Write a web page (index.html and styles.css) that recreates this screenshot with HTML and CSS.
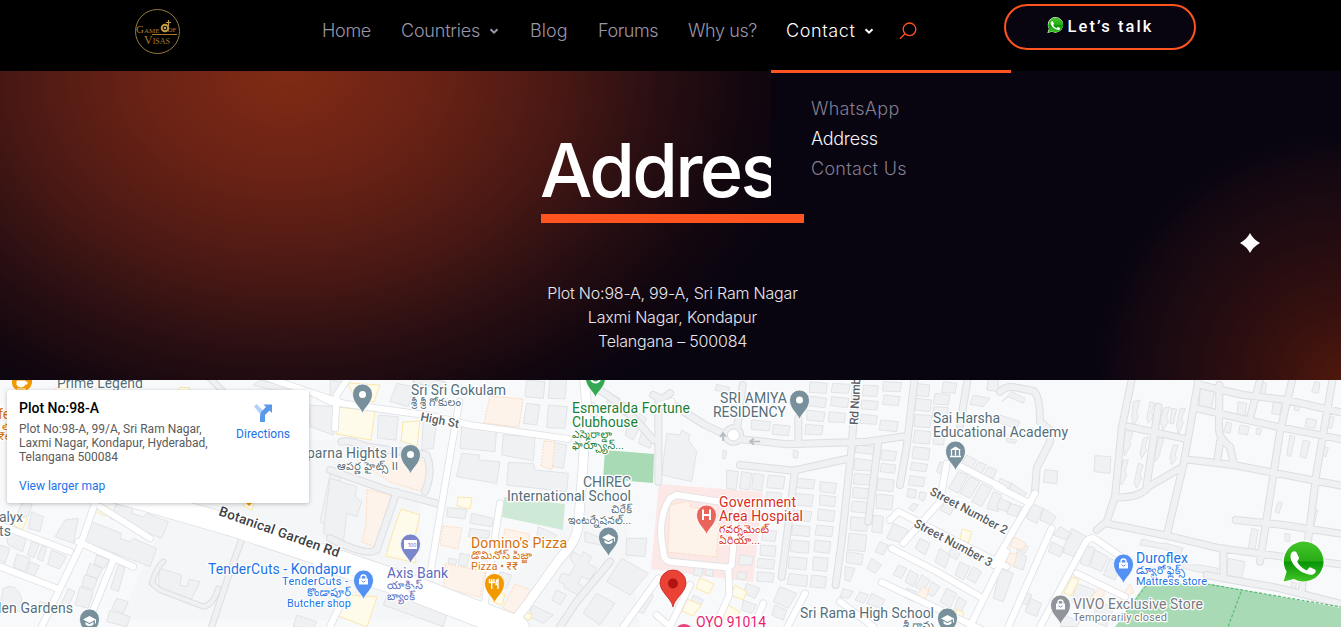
FILE: index.html
```
<!DOCTYPE html>
<html lang="en">
<head>
<meta charset="utf-8">
<title>Address</title>
<link rel="stylesheet" href="styles.css">
</head>
<body>
<header class="header">
  <a class="logo" href="#">
    <svg viewBox="0 0 46 46" width="46" height="46">
      <circle cx="23.500" cy="23.500" r="22" fill="none" stroke="#94793f" stroke-width="1"/>
      <text class="logo-text" x="2" y="25"><tspan font-size="11">G</tspan><tspan font-size="7">AME</tspan></text>
      <text class="logo-text" x="33.500" y="24" font-size="7">OF</text>
      <text class="logo-text" x="10" y="35.500"><tspan font-size="12">V</tspan><tspan font-size="8">ISAS</tspan></text>
      <path d="M18 26.500H43" stroke="#a87b25"/>
      <circle cx="31" cy="20" r="3.300" fill="#211808" stroke="#c39a42" stroke-width="2"/>
      <path d="M34.500 12v6M32 14.500h5" stroke="#c89a37" stroke-width="1.200"/>
      <circle cx="31" cy="20" r="1" fill="#e8d7a0"/>
    </svg>
  </a>
  <nav class="nav">
    <a class="nav-link home" href="#">Home</a>
    <a class="nav-link countries" href="#"><span>Countries</span><svg class="chevron" viewBox="0 0 10 7"><path d="M1.500 1.200 5 4.700 8.500 1.200"/></svg></a>
    <a class="nav-link blog" href="#">Blog</a>
    <a class="nav-link forums" href="#">Forums</a>
    <a class="nav-link why" href="#">Why us?</a>
    <div class="nav-item">
      <a class="nav-link contact active" href="#"><span>Contact</span><svg class="chevron" viewBox="0 0 10 7"><path d="M1.500 1.200 5 4.700 8.500 1.200"/></svg></a>
      <div class="submenu">
        <a class="sub-link" href="#">WhatsApp</a>
        <a class="sub-link current" href="#">Address</a>
        <a class="sub-link" href="#">Contact Us</a>
      </div>
    </div>
    <svg class="search" viewBox="0 0 18 18"><circle cx="10.500" cy="7.300" r="6.300"/><path d="M6 11.800 1 16.800" stroke-width="1.900"/></svg>
  </nav>
  <a class="talk" href="#">
    <svg class="talk-icon" viewBox="0 0 42 42"><use href="#whatsapp"/></svg><span>Let’s talk</span>
  </a>
</header>

<section class="hero">
  <h1 class="hero-title">Address</h1>
  <p class="hero-address">Plot No:98-A, 99-A, Sri Ram Nagar<br>Laxmi Nagar, Kondapur<br>Telangana – 500084</p>
  <svg class="star" viewBox="0 0 20 20"><path d="M10 0Q13 6 20 10Q13 14 10 20Q7 14 0 10Q7 6 10 0Z" fill="#fff"/></svg>
</section>

<section class="map">
<svg class="map-canvas" viewBox="0 380 1341 247">
  <defs>
    <linearGradient id="wa-green" x2="0" y2="1"><stop offset="0" stop-color="#45c52c"/><stop offset=".48" stop-color="#28ad14"/><stop offset=".52" stop-color="#099507"/><stop offset="1" stop-color="#42c526"/></linearGradient>
    <g id="whatsapp">
      <path d="M22 0A20.500 20.500 0 1 1 13 39L1 42 5 31A20.500 20.500 0 0 1 22 0Z" fill="#fff"/>
      <path d="M22 1.500A19.500 19.500 0 1 1 13 38L3 40.500 6 31A19.500 19.500 0 0 1 22 1.500Z" fill="url(#wa-green)"/>
      <path d="M10 14C11 11 14 10 15.500 12L18 17C18.500 19 16 20 16.500 21.500 18.500 25 22 28.500 25.500 29.500 27 29.500 27 26.500 29 26.500L34 29C35.500 31 33 34 30 34 19 33.500 8 22 10 14Z" fill="#fff"/>
    </g>
    <g id="pin"><path d="M0 20C-1 14-10 9.500-10 0A10 10 0 0 1 10 0C10 9.500 1 14 0 20Z" stroke="#fff" stroke-width=".8"/></g>
    <g id="bag"><path d="M-4.500-1.500h9v6h-9z" fill="#fff"/><path d="M-2.500-1v-1.500a2.500 2.500 0 0 1 5 0V-1" fill="none" stroke="#fff" stroke-width="1.300"/><path d="M-2 .8q2 2.600 4 0" fill="none" stroke="#6c93d8"/></g>
    <g id="cap"><path d="M-6.500-.5 0-4 6.500-.5 0 3ZM-4 2v2.500q4 3 8 0V2L0 4.200Z" fill="#fff"/><path d="M6-.5v4" stroke="#fff"/></g>

    <g id="grey-roads" class="roads">
      <g transform="translate(0 375) scale(.33333)">
        <path class="w20" d="M730 480 690 590 635 755M620 0 680 60"/>
        <path class="w16" d="M490 560Q470 575 455 625L480 645 610 695Q640 690 655 640"/>
      </g>
      <g transform="translate(330 375) scale(.33333)">
        <path class="w24" d="M0 285 170 345 320 385M200 350 140 525Q110 545 0 490M35 200Q60 195 110 215L290 240Q310 290 285 350M840 560 740 680 690 755M260 15 340 30M770 30Q850 50 970 195M1020 55 985 80V320"/>
      </g>
      <g transform="translate(660 375) scale(.33333)">
        <path class="w24" d="M-20 60 40 90 135 150 220 190 380 208 620 200 740 183M415 130V205M590 0 575 215 545 500 527 630M765 0 740 215 720 330M240 270 400 287 560 252M405 285 385 450 365 605M655 200 625 440M925 0 900 150M248 30 230 170"/>
        <circle cx="220" cy="180" r="22" class="w20"/>
      </g>
      <g transform="translate(1000 375) scale(.33333)">
        <path class="w22" d="M398 0 365 160 345 365 320 440 290 465M320 445 500 482 660 520 1035 570M598 0 550 270 500 482M555 253 700 270 1035 334M590 100 830 155 1035 195M600 30 730 60 860 75 1035 115M880 0 840 170 780 560M1000 0 950 290 905 650M658 30 657 160Q655 190 690 215L700 260M660 200 653 250M780 15 750 130M345 367Q420 370 445 335L540 280M475 95 440 330M385 155 550 190M0 50Q20 30 50 38L100 48Q120 60 120 140L150 165 150 200 110 280 105 350M707 435 850 450 1035 478M670 520 670 610 840 640 1035 690M620 600 670 610"/>
      </g>
    </g>
    <g id="white-roads" class="roads">
      <g transform="translate(0 375) scale(.33333)">
        <path class="w62" d="M300 340 430 375 690 450 1040 565"/>
        <path class="w22" d="M290 370 240 515 125 755M235 500 400 575M0 450 210 530M340 555 260 755M300 395 450 490M0 575 170 640M780 0 880 35 1030 85"/>
      </g>
      <g transform="translate(330 375) scale(.33333)">
        <path class="w76" d="M-20 545 0 555 210 625 390 695 560 760"/>
        <path class="w22" d="M388 80 345 330 300 600M-30 65 0 80 140 100 300 122 420 150 715 192M510 385 462 700M985 610 880 755M60 0 20 60 15 160M0 755 50 650"/>
        <path class="w28" d="M762 0 770 90 758 290 745 450Q740 500 690 550L590 690 540 755"/>
      </g>
      <g transform="translate(660 375) scale(.33333)">
        <path class="w22" d="M-10 720 30 755 90 630M205 580 208 660 165 755M10 530Q-10 430 30 370L50 360 230 388 215 570Q210 580 180 575L30 560Q10 555 10 530M435 655 370 780M310 685 270 780M665 622 1020 790M695 520 830 590 960 665M690 435 715 410 1040 575M1040 530 930 755M860 265 840 380 730 505M890 268 1030 340M540 680 640 755M0 90 35 80"/>
      </g>
      <g transform="translate(1000 375) scale(.33333)">
        <path class="w22" d="M-10 335 90 385M105 355 -20 570M155 460 25 755M385 560 290 495Q270 480 255 505L120 755M230 595 375 665"/>
      </g>
    </g>
  </defs>

  <path d="M0 380H1341V627H0Z" fill="#f8f9fb"/>
  <path d="M200 440H420V620H120ZM500 590 620 470 640 627H500Z" fill="#f5f6f8"/>
  <path d="M605 450 654 454 653 483 603 479Z" fill="#a8dab5"/>
  <path d="M504 497 565 504 563 530 502 517Z" fill="#ceead6"/>
  <path d="M659 484 763 492 753 582 651 569Z" fill="#fce8e6"/>
  <path d="M1146 583 1210 584 1341 608V627H1115Z" fill="#a8dab5"/>

  <!-- building footprints, by district -->
  <g class="buildings">
    <g transform="translate(0 375) scale(.33333)">
      <path d="M20 495 35 465 80 485 68 530 25 510ZM95 500 118 508 102 548 82 540ZM125 512 140 518 128 558 112 552ZM155 525 200 545 178 582 143 568ZM50 537 90 550 75 590 40 575ZM90 560 118 572 102 607 78 598ZM0 510 30 520 15 565-10 550ZM65 385 98 380 85 425 50 420ZM95 410 130 425 120 470 85 460ZM195 435 235 430 220 505 165 485ZM350 385 400 400 395 415 430 425 440 415 505 440 485 490 330 430ZM275 440 365 475 360 490 390 500 400 490 470 520 450 575 250 500ZM290 540 328 555 312 580 282 568ZM270 565 308 580 293 610 258 600ZM255 598 292 612 280 645 245 633ZM240 635 280 650 265 700 225 690ZM205 640 225 650 200 705 182 690ZM355 570 375 578 355 650 332 640ZM350 670 385 680 370 715 335 700ZM330 705 390 725 380 755 320 740ZM10 640Q50 620 65 670L60 710 0 690ZM120 680 160 690 150 715 110 705ZM480 580 545 600 540 630 560 635 568 612 600 620 570 680 500 655Q465 650 480 580ZM890 720 950 740 940 760 880 755ZM925 90 1000 95 1000 180 930 155ZM780 15 880 40 870 60 760 30Z"/>
      <path d="M990 300 1020 290V470L960 440Z"/>
    </g>
    <g transform="translate(330 375) scale(.33333)">
      <path d="M0 310 80 335 75 365 95 380 80 425 50 415 40 505-20 475ZM0 15 35 20 20 60 0 65ZM145 120 205 125 198 195 142 190ZM280 130 320 140 310 220 275 225ZM200 25 250 35 235 95 180 80ZM395 155 500 162 495 230 390 220ZM520 180 615 185 610 257 515 240ZM395 235 450 240 445 255 510 260 500 325 380 305ZM535 262 610 265 615 285 715 295 710 350 530 330ZM590 15 645 20 640 70 585 65ZM660 5 710 10 705 72 655 70ZM655 90 712 95 705 160 650 158ZM590 85 630 90 620 150 580 145ZM655 200 710 210 700 280 650 272ZM352 398 410 403 405 432 350 425ZM425 415 490 430 485 455 420 445ZM420 460 480 468 475 490 415 485ZM355 550 380 553 378 568 355 565ZM390 535 420 540 410 575 385 570ZM890 490 950 490 945 545 888 540ZM875 550 955 595 900 660 830 620ZM800 655 855 685 810 750 760 715ZM730 530 755 545 760 530 785 545 775 565 800 580 780 615 755 605 745 625 765 640 755 665 705 640 700 625 685 620 695 595 720 600 735 570 720 550ZM605 690 670 720 640 745 600 725ZM680 645 710 660 690 690 665 675ZM625 455 680 480 665 500 620 485ZM940 660 960 645 970 665 940 715 920 710ZM510 590 545 600 530 640 505 635ZM170 665 200 655 350 720 340 755 160 690ZM765 470 840 500 835 515 765 500ZM880 80 915 100 900 130 870 115ZM920 110 950 130 935 165 905 145ZM895 145 925 165 910 195 885 180ZM935 170 970 190 960 220 925 205ZM840 55 870 70 860 95 830 85ZM780 80 815 95 800 125 775 110Z"/>
    </g>
    <g transform="translate(660 375) scale(.33333)">
      <path d="M20 175 60 180 65 165 90 180 85 195 110 230 95 320 5 300ZM200 285 235 290 228 345 200 340ZM245 290 275 295 268 345 238 340ZM280 295 312 300 305 348 275 342ZM325 300 375 305 370 342 320 338ZM320 350 365 355 360 395 315 390ZM410 310 465 315 460 342 410 338ZM480 320 530 325 525 355 480 350ZM405 355 460 360 455 395 405 390ZM480 360 528 365 523 395 478 390ZM400 405 455 410 450 440 398 435ZM475 402 525 408 520 440 472 435ZM398 450 450 455 448 485 395 480ZM470 450 520 455 515 485 465 480ZM395 495 448 500 445 535 390 530ZM465 495 512 500 508 535 462 530ZM388 545 442 550 438 585 385 580ZM460 545 505 550 500 590 458 585ZM388 595 443 602 440 635 382 628ZM455 600 500 605 495 640 450 635ZM310 465 350 468 345 500 305 495ZM302 510 348 513 345 545 300 540ZM295 550 345 555 340 583 290 578ZM292 590 343 595 338 622 290 618ZM450 20 502 25 498 55 448 52ZM445 63 500 70 495 98 443 92ZM440 105 495 112 490 140 440 135ZM437 148 490 152 485 180 435 178ZM518 25 570 28 565 55 513 52ZM515 65 567 70 562 98 512 92ZM508 110 557 115 553 143 505 140ZM275 135 332 140 328 168 273 163ZM340 148 390 153 385 182 337 178ZM170 28 210 38 205 55 165 45ZM610 30 655 33 650 65 608 62ZM605 75 655 80 650 105 602 102ZM605 118 652 123 648 148 600 145ZM670 20 725 23 720 50 668 48ZM672 60 720 65 715 92 668 88ZM662 135 715 140 710 170 658 165ZM765 25 810 30 805 65 762 62ZM768 70 815 75 810 110 765 105ZM765 118 815 122 810 158 762 155ZM765 165 812 170 808 207 758 203ZM760 215 810 220 805 255 756 250ZM755 262 803 268 798 290 750 285ZM750 302 795 308 790 335 745 330ZM590 210 643 215 640 238 585 232ZM585 250 640 257 635 288 582 285ZM583 295 638 300 633 330 580 327ZM580 337 635 342 630 372 577 368ZM577 378 632 382 628 415 573 410ZM573 425 625 430 620 470 570 465ZM567 475 620 480 615 530 562 525ZM560 530 610 538 605 570 558 562ZM667 225 710 230 705 258 662 254ZM665 265 708 270 703 295 660 290ZM655 310 703 315 698 350 650 345ZM650 357 700 362 695 405 648 400ZM640 420 670 425 665 475 635 470ZM850 20 890 25 885 55 845 52ZM825 55 870 60 865 90 820 87ZM820 95 865 98 860 130 817 127ZM820 175 855 180 850 210 820 207ZM940 60 990 70 970 95 930 88ZM985 10 1015 12 1015 50 980 45ZM745 340 770 345 765 370 740 365ZM660 500 685 510 670 540 645 530ZM635 550 665 570 645 595 620 580ZM700 445 745 465 730 505 680 490ZM555 575 585 580 570 620 555 615ZM240 540 280 545 275 570 235 570ZM235 590 260 593 255 615 230 610ZM360 635 410 655 385 700 340 680ZM260 625 300 640 285 670 250 655ZM250 675 290 690 275 715 245 705ZM345 690 380 705 370 735 335 720ZM100 660 130 675 120 695 90 685ZM105 575 130 580 125 605 100 600ZM138 580 160 583 157 605 135 600ZM400 225 415 230 412 250 400 247ZM190 225 200 228 196 252 188 250Z"/>
      <path d="M840 260 865 270 850 300 830 290ZM895 290 925 300 895 355 865 340ZM930 305 960 320 930 370 900 355ZM965 325 995 340 965 395 935 380ZM920 240 950 255 935 280 905 265ZM955 260 980 270 965 295 940 285ZM985 275 1010 285 1000 310 970 300ZM1000 350 1025 360 1015 410 980 400ZM860 370 890 385 870 420 840 405ZM840 520 870 540 855 580 825 560ZM880 500 910 515 890 555 865 540ZM900 560 930 575 910 615 885 600ZM940 575 965 590 945 625 920 610ZM780 490 810 505 795 540 765 520ZM715 570 740 580 725 610 700 600ZM750 585 775 600 760 635 735 620ZM740 640 770 650 760 680 730 665ZM785 600 810 615 790 650 765 635ZM815 620 840 635 820 665 800 655ZM860 640 890 655 870 700 840 680ZM895 665 920 680 900 720 880 710ZM600 650 625 660 610 685 585 675ZM635 655 675 675 660 700 620 685ZM550 640 580 650 565 670 540 665ZM780 350 800 355 790 380 775 370ZM760 385 775 390 760 410 745 400Z"/>
    </g>
    <g transform="translate(1000 375) scale(.33333)">
      <path d="M285 242 333 245 330 295 282 290ZM135 284 173 288 170 326 130 322ZM0 310 35 325 25 345-5 335ZM35 325 80 355 65 375 25 350ZM0 370 35 385 20 410-10 400ZM30 385 65 395 50 425 20 415ZM95 385 130 400 110 445 80 430ZM130 400 168 425 155 450 120 435ZM180 455 215 475 200 495 160 480ZM215 460 260 485 220 545 185 530 200 495ZM155 500 195 520 180 545 145 530ZM255 510 285 520 265 575 240 565ZM285 525 325 545 305 590 270 575ZM330 550 365 565 345 615 310 600ZM60 500 85 515 75 535 50 525ZM50 530 80 545 70 585 40 575ZM75 650 95 660 85 690 65 685ZM90 670 125 685 110 725 75 710ZM0 580 40 595 10 680-20 670ZM230 625 285 645 260 700 215 680ZM290 675 340 700 320 755 280 740ZM190 720 240 740 230 755H180ZM5 80 35 50 75 70 70 85 25 65ZM0 120 60 140 50 160 0 145ZM20 190 50 195 45 205 20 200ZM400 80 420 75 410 110 415 125 400 155 395 130ZM450 80 465 85 455 110 460 125 445 145 440 130ZM490 100 510 95 500 125 505 140 490 165 480 140ZM540 100 557 100 545 130 550 145 535 180 530 150ZM375 170 400 165 390 200 392 210 375 242 370 220ZM430 190 445 185 435 215 440 225 425 250 420 235ZM475 190 492 190 480 230 480 240 465 260 465 235ZM520 210 535 210 525 240 530 250 515 270 510 245ZM370 255 385 255 375 290 380 300 365 330 355 315ZM415 265 430 270 420 300 425 310 410 340 402 325ZM515 100 530 102 520 147 510 145ZM425 492 480 505 500 505 550 520 540 540 490 522 420 510ZM540 560 570 570 600 570 655 580 650 600 590 590 550 580ZM600 40 645 40 635 100 598 95ZM715 80 740 85 735 125 710 120ZM680 140 695 145 690 175 670 170ZM720 150 748 155 742 180 715 175ZM770 160 785 162 780 180 768 177ZM820 80 845 85 840 120 815 115ZM870 180 885 185 872 245 860 240ZM910 195 930 200 918 250 900 245ZM970 215 985 218 978 245 965 240ZM885 90 900 92 895 108 882 105ZM920 130 950 135 945 160 915 155ZM990 125 1003 127 995 160 982 158ZM835 380 847 382 837 415 825 410ZM935 400 953 405 940 462 925 458ZM755 460 775 465 765 525 745 520ZM855 475 870 478 868 500 855 497ZM685 550 735 560 725 610 680 600ZM875 620 890 625 885 645 872 640ZM945 20 960 22 955 55 935 50ZM780 20 800 25 795 60 775 55Z"/>
    </g>
  </g>
  <g class="buildings warm">
    <path d="M337 407 375 411 371 440 336 434ZM403 422 420 421 417 446 401 441ZM458 497 472 498 470 509 457 506ZM401 509 420 515 417 527 413 546 416 563 386 556 392 535ZM98 502 112 510 105 516 95 511ZM17 515 28 519 22 530 13 525ZM338 594 377 597 367 627 336 615ZM348 383 380 385 374 402 355 398ZM60 380 76 381 70 392 55 391ZM180 387 190 388 186 396 176 395ZM246 497 255 500 252 510 243 506ZM700 578 714 584 709 594 696 588ZM687 599 701 605 693 616 682 611ZM735 585 747 592 743 600 731 595ZM728 605 740 612 733 622 722 618ZM962 529 972 532 968 543 960 540ZM1072 577 1079 580 1071 596 1064 593ZM957 609 964 613 959 623 954 620ZM524 612 532 614 530 620 523 618ZM495 592 505 594 502 605 493 602Z"/>
  </g>
  <g class="buildings peach">
    <path d="M490 396 523 399 519 427 484 423ZM544 441 555 442 552 470 541 466ZM367 490 391 495 389 504 385 516 384 535 380 549 362 542 366 525ZM443 526 462 528 458 549 440 545ZM445 564 485 571 480 597 444 588ZM347 442 428 462Q432 475 420 491L390 482 347 453ZM670 505 690 501 690 507 717 511 719 526 716 557 668 552ZM505 529 530 534 527 548 503 539ZM515 584 530 590 520 616 503 608ZM1014 537 1026 543 1023 550 1010 547ZM1010 553 1017 554 1014 566 1003 560ZM922 587 929 590 925 601 917 597ZM1130 584 1134 592 1120 600ZM1100 587 1107 589 1098 604 1090 599Z"/>
  </g>

  <use href="#grey-roads" class="road-edge"/>
  <use href="#grey-roads" class="road-fill grey"/>
  <use href="#white-roads" class="road-edge light"/>
  <use href="#white-roads" class="road-fill"/>
  <circle cx="733.500" cy="435" r="6" fill="#fff" stroke="#dadce0"/>
  <path d="M723 441v-7m-3 3 3-4 3 4M760 441.500h-9m3-3-4 3 4 3" fill="none" stroke="#b6bcc2" stroke-width="1.700"/>
  <path d="M1207 584 1341 607M1241 592 1228 627" fill="none" stroke="#5bb974" stroke-width="1.200" stroke-dasharray="3 1.800"/>
  <path d="M1146 586 1120 620" stroke="#5bb974" stroke-dasharray="3 2"/>

  <!-- places -->
  <g class="slate">
    <use href="#pin" x="362.500" y="394"/><use href="#pin" x="410.500" y="454.500"/><use href="#pin" x="608.500" y="537"/>
    <use href="#pin" x="799.500" y="400"/><use href="#pin" x="955.500" y="451"/><use href="#pin" x="89.500" y="619"/><use href="#pin" x="947.500" y="618"/>
  </g>
  <g fill="#fff"><circle cx="362.500" cy="394.500" r="3.500"/><circle cx="410.500" cy="454.500" r="3.500"/><circle cx="799.500" cy="400" r="3.500"/></g>
  <use href="#cap" x="608.500" y="538"/><use href="#cap" x="89.500" y="620"/><use href="#cap" x="947.500" y="619"/>
  <path d="M950 450 955.500 446.500 961 450Z" fill="#fff"/><path d="M951.500 450v5.500M955.500 450v5.500M959.500 450v5.500M950 456.500h11" stroke="#fff" stroke-width="1.300"/>
  <use href="#pin" x="595.500" y="378" fill="#34a853"/><path d="M591 380Q595.500 385 600 380" stroke="#fff" stroke-width="2" fill="none"/>
  <use href="#pin" x="410.500" y="544" fill="#7986cb"/><path d="M404 540h13v9h-13Z" fill="#fff"/><text x="408" y="547" font-size="5" fill="#5c6bc0">100</text>
  <use href="#pin" x="363.500" y="580" fill="#5491f5"/><use href="#bag" x="363.500" y="580"/>
  <use href="#pin" x="1123.500" y="564" fill="#5491f5"/><use href="#bag" x="1123.500" y="564"/>
  <use href="#pin" x="1060.500" y="605" fill="#8f959b"/><use href="#bag" x="1060.500" y="605"/>
  <use href="#pin" x="494.500" y="583.500" fill="#f29900"/>
  <path d="M489.500 579v3.500h4.500V579M491.700 579v10M498 589v-9.500q-2 .5-2 5h2" fill="none" stroke="#fff" stroke-width="1.400"/>
  <path d="M12 380H32V383Q30 391 22 391Q12 390 12 383Z" fill="#f29900"/><path d="M17 381h8v4q-4 4-8 0ZM25 382h2v2h-2M17 389h9" fill="#fff" stroke="#fff"/>
  <path d="M246 503H252L249 506Z" fill="#f29900"/>
  <use href="#pin" x="706.500" y="515" fill="#e9655b"/><path d="M703 509.500v10.500M710 509.500v10.500M703 515h7" stroke="#fff" stroke-width="2"/>
  <path d="M673 607C672 599 660 592 660 583A13 13 0 0 1 686 583C686 592 674 599 673 607Z" fill="#ea4335" stroke="#c5221f" stroke-width=".8"/><circle cx="673" cy="583.500" r="5" fill="#b31412"/>
  <circle cx="684" cy="634" r="10" fill="#ec407a"/>

  <g class="labels">
    <g class="t-slate">
      <text x="57" y="388" textLength="86">Prime Legend</text>
      <text x="411" y="395" textLength="95">Sri Sri Gokulam</text>
      <text x="411" y="406" class="te" textLength="50">శ్రీ శ్రీ గోకులం</text>
      <text x="307" y="458" textLength="91">parna Hights II</text>
      <text x="337" y="470" class="te" textLength="61">ఆపర్ణ హైట్స్ II</text>
      <text x="583" y="487" textLength="48">CHIREC</text>
      <text x="507" y="501" textLength="124">International School</text>
      <text x="611" y="513" class="te" textLength="21">చిరేక్</text>
      <text x="568" y="524" class="te" textLength="63">ఇంటర్నేషనల్...</text>
      <text x="720" y="403" textLength="67">SRI AMIYA</text>
      <text x="713" y="417" textLength="73">RESIDENCY</text>
      <text x="933" y="423" textLength="67">Sai Harsha</text>
      <text x="933" y="437" textLength="135">Educational Academy</text>
      <text x="800" y="618" textLength="134">Sri Rama High School</text>
      <text x="903" y="629" class="te" textLength="31">శ్రీ రామ</text>
      <text x="-1" y="522" textLength="24">alyx</text>
      <text x="-1" y="536" textLength="12">ts</text>
      <text x="-2" y="613" textLength="75">len Gardens</text>
    </g>
    <g class="t-green">
      <text x="572" y="413" textLength="118">Esmeralda Fortune</text>
      <text x="572" y="427" textLength="66">Clubhouse</text>
      <text x="572" y="438" class="te" textLength="40">ఎస్మెరాల్డా</text>
      <text x="572" y="449" class="te" textLength="52">ఫార్చ్యూన్...</text>
    </g>
    <g class="t-red">
      <text x="719" y="507" textLength="77">Government</text>
      <text x="719" y="521" textLength="84">Area Hospital</text>
      <text x="719" y="533" class="te" textLength="50">గవర్నమెంట్</text>
      <text x="719" y="544" class="te" textLength="41">ఏరియా...</text>
    </g>
    <g class="t-orange">
      <text x="471" y="548" textLength="96">Domino's Pizza</text>
      <text x="471" y="559" class="te" textLength="61">డొమినోస్ పిజ్జా</text>
      <text x="471" y="570" class="small" textLength="47">Pizza • ₹₹</text>
      <text x="-2" y="419">fe</text>
      <text x="2" y="430" class="te">త</text>
      <text x="-1" y="440" class="small">₹e</text>
    </g>
    <g class="t-indigo">
      <text x="387" y="578" textLength="61">Axis Bank</text>
      <text x="387" y="589" class="te" textLength="36">యాక్సిస్</text>
      <text x="387" y="600" class="te" textLength="28">బ్యాంక్</text>
    </g>
    <g class="t-blue">
      <text x="208" y="574" textLength="143">TenderCuts - Kondapur</text>
      <text x="282" y="585" class="small" textLength="66">TenderCuts -</text>
      <text x="307" y="596" class="te" textLength="44">కొండాపూర్</text>
      <text x="287" y="607" class="small" textLength="64">Butcher shop</text>
      <text x="1136" y="563" textLength="52">Duroflex</text>
      <text x="1136" y="574" class="te" textLength="49">డ్యూరోఫ్లెక్స్</text>
      <text x="1136" y="585" class="small" textLength="71">Mattress store</text>
    </g>
    <g class="t-grey">
      <text x="1073" y="609" textLength="130">VIVO Exclusive Store</text>
      <text x="1073" y="621" class="small" textLength="94">Temporarily closed</text>
    </g>
    <text class="t-pink" x="696" y="627" textLength="70">OYO 91014</text>
    <g class="t-road">
      <text class="major" textLength="127" transform="translate(218 515) rotate(19.500)">Botanical Garden Rd</text>
      <text textLength="39" transform="translate(420 420.500) rotate(11)">High St</text>
      <text textLength="86" transform="translate(929 494) rotate(28)">Street Number 2</text>
      <text textLength="87" transform="translate(913 526) rotate(28)">Street Number 3</text>
      <text textLength="47" transform="translate(858 425) rotate(-87)">Rd Numb</text>
    </g>
  </g>
</svg>

  <div class="place-card">
    <div class="place-info">
      <div class="place-name">Plot No:98-A</div>
      <div class="place-address">Plot No:98-A, 99/A, Sri Ram Nagar,<br>Laxmi Nagar, Kondapur, Hyderabad,<br>Telangana 500084</div>
      <a class="place-link" href="#">View larger map</a>
    </div>
    <a class="directions" href="#">
      <svg viewBox="0 0 20 20" width="20" height="20"><path d="M1 3.500 3.500 1 11 8.500V12H8Z" fill="#b3d1f7"/><path d="M7 19V13Q7 10 9 8L13 4 10.500 1.500H19V10L16.500 7.500 12 12V19Z" fill="#5a98e8"/></svg>
      <span>Directions</span>
    </a>
  </div>
  <svg class="whatsapp-float" viewBox="0 0 42 42"><use href="#whatsapp"/></svg>
</section>
</body>
</html>
```
FILE: styles.css
```
* { box-sizing: border-box; }
body {
  margin: 0;
  height: 627px;
  overflow: hidden;
  display: flex;
  flex-direction: column;
  font-family: Inter, "Open Sans", sans-serif;
  background: #080410;
}
a { text-decoration: none; color: inherit; }

.header {
  flex: 0 0 71px;
  display: flex;
  align-items: flex-start;
  background: #000;
}
.logo { margin: 8px 0 0 134px; width: 46px; height: 46px; }
.logo svg { display: block; }
.logo-text { font-family: "Liberation Serif", serif; fill: #a87c28; }

.nav {
  display: flex;
  align-items: center;
  height: 62px;
  margin-left: 142px;
  width: 682px;
  gap: 30px;
}
.nav-link {
  display: flex;
  align-items: center;
  justify-content: space-between;
  color: #9a96a8;
  font-size: 18px;
  font-weight: 300;
  line-height: 24px;
  white-space: nowrap;
  flex: none;
}
.home { width: 49px; letter-spacing: -.3px; }
.countries { width: 98px; letter-spacing: -.2px; }
.blog { width: 38px; letter-spacing: .1px; margin-left: 1px; }
.forums { width: 60px; letter-spacing: -.4px; }
.why { width: 68px; letter-spacing: -.4px; }
.contact { width: 88px; letter-spacing: .6px; }
.active { color: #fff; }
.chevron { width: 10px; height: 7px; }
.chevron path { fill: none; stroke: currentColor; stroke-width: 2; }
.nav-item { position: relative; }
.submenu {
  position: absolute;
  z-index: 2;
  top: 51px;
  left: -15px;
  width: 240px;
  height: 134px;
  padding: 21px 40px 19px;
  background: #080410;
  border-top: 3px solid #ff541f;
  display: flex;
  flex-direction: column;
}
.sub-link {
  line-height: 30px;
  font-size: 18px;
  font-weight: 300;
  letter-spacing: .3px;
  color: #837f91;
}
.current { color: #f4f3f7; letter-spacing: -.3px; }
.search { width: 18px; height: 18px; margin-left: -5px; flex: none; }
.search * { fill: none; stroke: #ff541f; stroke-width: 1.3; }

.talk {
  display: flex;
  align-items: center;
  justify-content: center;
  margin-top: 4px;
  width: 192px;
  height: 46px;
  padding-bottom: 1px;
  border: 2px solid #ff541f;
  border-radius: 23px;
  background: #080410;
  color: #fff;
  font: 500 16.5px Roboto, sans-serif;
  letter-spacing: 2.05px;
  gap: 5px;
}
.talk-icon { width: 16px; height: 16px; margin-top: -4px; }

.hero {
  flex: 0 0 309px;
  position: relative;
  display: flex;
  flex-direction: column;
  align-items: center;
  padding-left: 4px;
  background:
    radial-gradient(ellipse 530px 400px at 285px 0, #802b14 0%, #6c2315 25%, #4c1914 50%, #2a0f12 70%, #13070f 87%, #080410 100%),
    #080410;
}
.hero::before {
  content: "";
  position: absolute;
  inset: 0;
  background: radial-gradient(circle 245px at 100% 100%, #4e180c 0%, #35100f 30%, #220c11 60%, #130812 88%, rgba(8, 4, 16, 0) 100%);
}
.hero-title {
  position: relative;
  margin: 57px 0 0;
  width: 263px;
  height: 95px;
  border-bottom: 9px solid #ff541f;
  color: #fff;
  font-size: 74px;
  font-weight: 500;
  line-height: 84px;
  letter-spacing: -2.7px;
  text-indent: -1px;
  white-space: nowrap;
}
.hero-address {
  position: relative;
  margin: 58px 0 0;
  color: #e8e6ee;
  text-align: center;
  font-size: 16px;
  font-weight: 300;
  line-height: 24px;
  letter-spacing: -.2px;
}
.star { position: absolute; left: 1240px; top: 162px; width: 20px; height: 20px; }

.map { flex: 0 0 247px; position: relative; }
.map-canvas { display: block; width: 1341px; height: 247px; }
.buildings { fill: #f0f1f3; stroke: #dfe1e4; stroke-width: .9; }
.buildings g { stroke-width: 2.7; }
.warm { fill: #fffbea; stroke: #fbe3a4; }
.peach { fill: #fef3ea; stroke: #fad9bb; stroke-dasharray: 2 1; }
.roads { fill: none; stroke-linejoin: round; stroke-linecap: round; }
.road-edge { --edge: 6px; stroke: #dcdee2; }
.light { --edge: 5px; stroke: #dfe1e5; }
.road-fill { --edge: 0px; stroke: #fff; }
.grey { stroke: #f0f1f3; }
.w16 { stroke-width: calc(12px + var(--edge)); }
.w20 { stroke-width: calc(15px + var(--edge)); }
.w22 { stroke-width: calc(18px + var(--edge)); }
.w24 { stroke-width: calc(18px + var(--edge)); }
.w28 { stroke-width: calc(26px + var(--edge)); }
.w62 { stroke-width: calc(62px + var(--edge)); }
.w76 { stroke-width: calc(74px + var(--edge)); }
.slate { fill: #78909c; }
.labels {
  font-family: Roboto, "Noto Sans", "Noto Sans Telugu", sans-serif;
  font-size: 14px;
  stroke: #fff;
  stroke-width: 2.5px;
  stroke-linejoin: round;
  paint-order: stroke;
}
.te, .small { font-size: 11px; }
.t-slate { fill: #546e7a; }
.t-green { fill: #188038; }
.t-red { fill: #d93025; }
.t-orange { fill: #d56e0c; }
.t-indigo { fill: #5c6bc0; }
.t-blue { fill: #1a73e8; }
.t-grey { fill: #757a80; }
.t-pink { fill: #e91e73; }
.t-road { fill: #5a5f64; font-size: 12px; font-weight: 500; }
.major { font-size: 13.5px; fill: #3c4043; }

.place-card {
  position: absolute;
  left: 7px;
  top: 10px;
  width: 302px;
  height: 113px;
  padding: 9px 19px 0 12px;
  display: flex;
  justify-content: space-between;
  background: #fff;
  border-radius: 2px;
  box-shadow: 0 1px 4px rgba(0, 0, 0, .25);
  font: 12px/14px Roboto, sans-serif;
}
.place-name { font-size: 14px; font-weight: 500; line-height: 18px; color: #000; }
.place-address { margin-top: 5px; color: #5b5b5b; }
.place-link { display: block; margin-top: 15px; color: #1a73e8; }
.directions {
  display: flex;
  flex-direction: column;
  align-items: center;
  padding-top: 4px;
  gap: 4px;
  color: #1a73e8;
}
.whatsapp-float { position: absolute; left: 1280px; top: 160px; width: 44px; height: 43px; }
```
